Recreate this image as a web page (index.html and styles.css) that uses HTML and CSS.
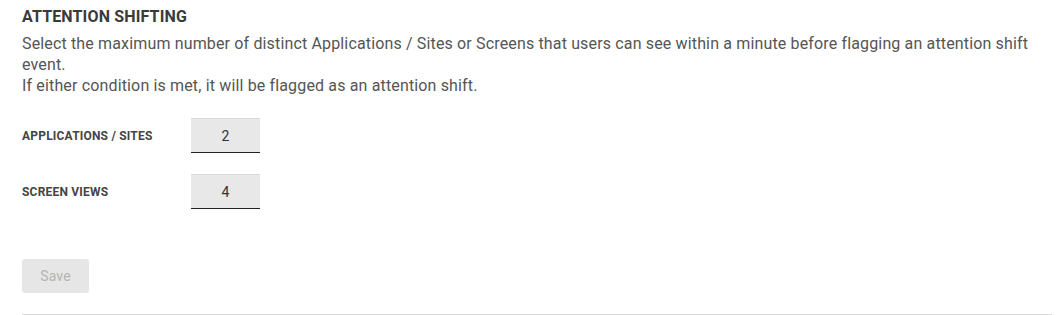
FILE: index.html
```html
<!DOCTYPE html>
<html>
<head>
<meta charset="utf-8">
<link rel="stylesheet" href="styles.css">
</head>
<body>
<div class="panel">
  <h2 class="title">ATTENTION SHIFTING</h2>
  <p class="desc">Select the maximum number of distinct Applications / Sites or Screens that users can see within a minute before flagging an attention shift event.<br>If either condition is met, it will be flagged as an attention shift.</p>
  <div class="fields">
    <div class="row">
      <label class="label">APPLICATIONS / SITES</label>
      <div class="input">2</div>
    </div>
    <div class="row">
      <label class="label">SCREEN VIEWS</label>
      <div class="input">4</div>
    </div>
  </div>
  <button class="save">Save</button>
  <hr class="divider">
</div>
</body>
</html>
```
FILE: styles.css
```css
html, body {
  margin: 0;
  padding: 0;
  background: #fff;
}
body {
  font-family: Roboto, "Liberation Sans", sans-serif;
  color: #444;
}
.panel {
  margin: 0 11px 0 22px;
  padding-top: 7px;
}
.title {
  margin: 0 0 6px;
  font-size: 16px;
  line-height: 20px;
  font-weight: 700;
  letter-spacing: 0.15px;
  color: #3a3a3a;
}
.desc {
  margin: 0;
  font-size: 16px;
  line-height: 21px;
  letter-spacing: 0.15px;
  color: #555;
}
.fields {
  display: flex;
  flex-direction: column;
  gap: 21px;
  margin-top: 22px;
}
.row {
  display: flex;
  align-items: center;
}
.label {
  width: 169px;
  font-size: 12px;
  font-weight: 700;
  letter-spacing: 0.2px;
  color: #444;
}
.input {
  box-sizing: border-box;
  width: 69px;
  height: 35px;
  background: #e8e8e8;
  border-top: 1px solid #dadada;
  border-bottom: 1px solid #222;
  display: flex;
  align-items: center;
  justify-content: center;
  font-size: 14px;
  color: #333;
}
.save {
  display: block;
  margin-top: 50px;
  width: 67px;
  height: 34px;
  border: none;
  border-radius: 3px;
  background: #e6e6e6;
  color: #b5b5b5;
  font-family: Roboto, "Liberation Sans", sans-serif;
  font-size: 14px;
  letter-spacing: 0.15px;
  padding: 0;
}
.divider {
  margin: 21px 0 0;
  border: none;
  border-top: 1px solid #dcdcdc;
  height: 0;
}
```
